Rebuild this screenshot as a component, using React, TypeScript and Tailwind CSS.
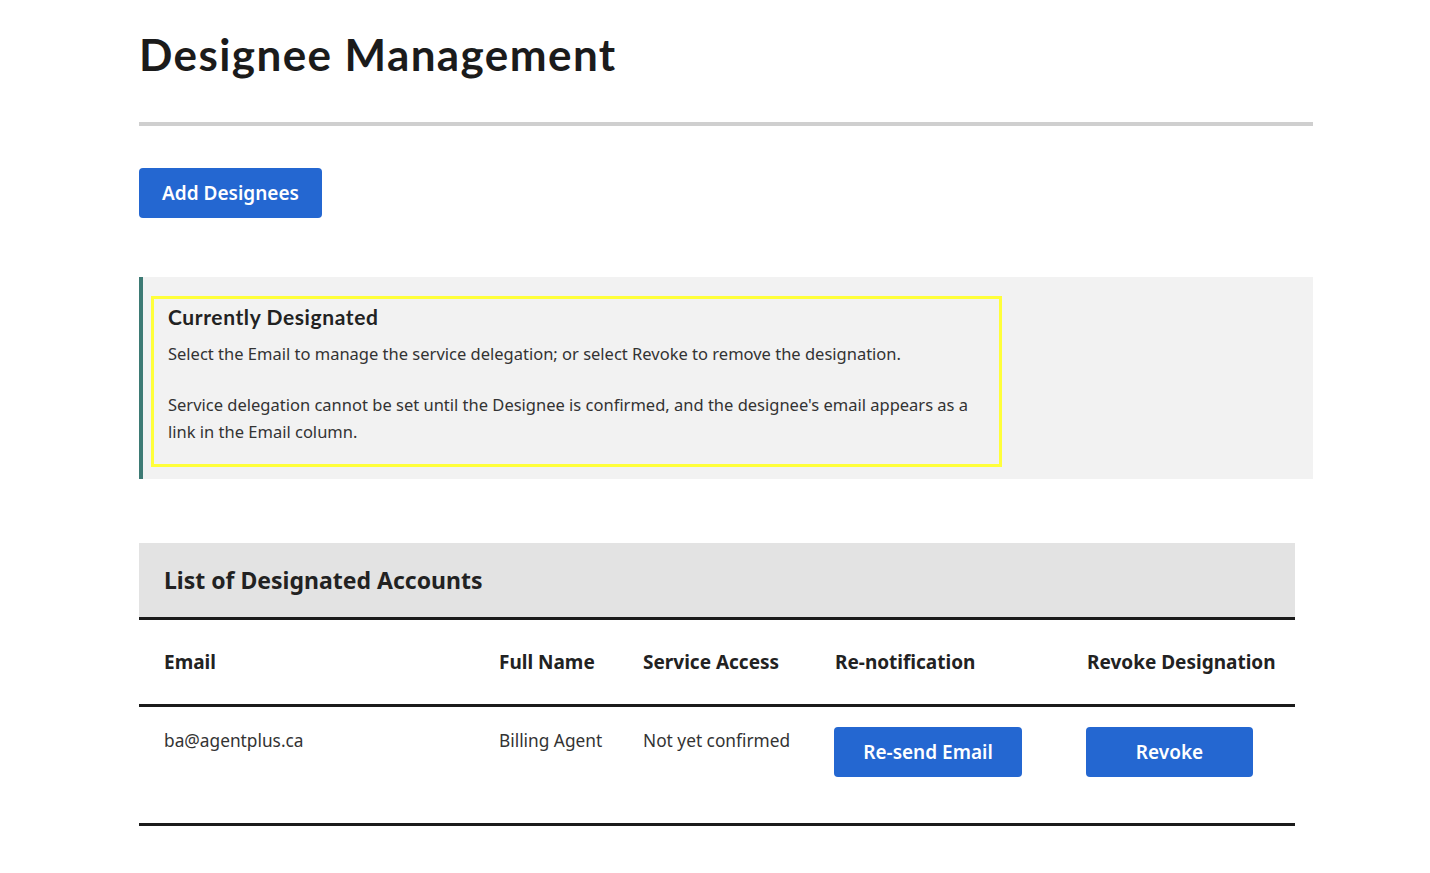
import * as React from 'react';

const body = { fontFamily: '"Noto Sans", "Open Sans", sans-serif' };
const heading = { fontFamily: 'Lato, "Noto Sans", sans-serif' };

const columns = ['Email', 'Full Name', 'Service Access', 'Re-notification', 'Revoke Designation'];

const rows = [{ email: 'ba@agentplus.ca', name: 'Billing Agent', access: 'Not yet confirmed' }];

const BlueButton = ({ children, className }: { children: React.ReactNode; className?: string }) => (
  <button
    type="button"
    className={`h-[50px] rounded-[4px] bg-[#2467d1] text-[19px] font-semibold text-white ${className ?? ''}`}
  >
    {children}
  </button>
);

export default function App() {
  return (
    <div className="min-h-screen bg-white text-[#333]" style={body}>
      <main className="ml-[139px] w-[1174px] pt-[26px]">
        <h1 className="text-[44px] font-bold leading-[56px] tracking-[1.4px] text-[#1b1b1b]" style={heading}>
          Designee Management
        </h1>
        <hr className="mt-[40px] h-[4px] border-0 bg-[#cfcfcf]" />

        <BlueButton className="mt-[42px] w-[183px]">Add Designees</BlueButton>

        <section className="mt-[59px] flex h-[202px] border-l-[4px] border-[#3d7a74] bg-[#f2f2f2] pl-[8px] pt-[19px]">
          <div className="h-[171px] w-[851px] border-[3px] border-[#ffff3a] pl-[14px] pt-[4px]">
            <h2 className="text-[21px] font-bold leading-[28px] tracking-[0.6px] text-[#222]" style={heading}>
              Currently Designated
            </h2>
            <p className="mt-[9px] text-[16.5px] leading-[27px]">
              Select the Email to manage the service delegation; or select Revoke to remove the designation.
            </p>
            <p className="mt-[24px] pr-[24px] text-[16.5px] leading-[27px]">
              Service delegation cannot be set until the Designee is confirmed, and the designee's email appears as a
              link in the Email column.
            </p>
          </div>
        </section>

        <section className="mt-[64px] w-[1156px]">
          <div className="flex h-[77px] items-center border-b-[3px] border-[#1b1b1b] bg-[#e3e3e3] pl-[25px]">
            <h2 className="text-[23px] font-bold text-[#222]">List of Designated Accounts</h2>
          </div>
          <div className="grid h-[87px] grid-cols-[335px_144px_192px_252px_1fr] items-center border-b-[3px] border-[#1b1b1b] pl-[25px]">
            {columns.map((c) => (
              <div key={c} className="text-[19px] font-bold text-[#222]">
                {c}
              </div>
            ))}
          </div>
          {rows.map((r) => (
            <div
              key={r.email}
              className="grid h-[119px] grid-cols-[335px_144px_192px_252px_1fr] items-start border-b-[3px] border-[#1b1b1b] pl-[25px] pt-[20px] text-[17.3px] leading-[28px]"
            >
              <div>{r.email}</div>
              <div>{r.name}</div>
              <div>{r.access}</div>
              <div className="-ml-px">
                <BlueButton className="w-[188px]">Re-send Email</BlueButton>
              </div>
              <div className="-ml-px">
                <BlueButton className="w-[167px]">Revoke</BlueButton>
              </div>
            </div>
          ))}
        </section>
      </main>
    </div>
  );
}
